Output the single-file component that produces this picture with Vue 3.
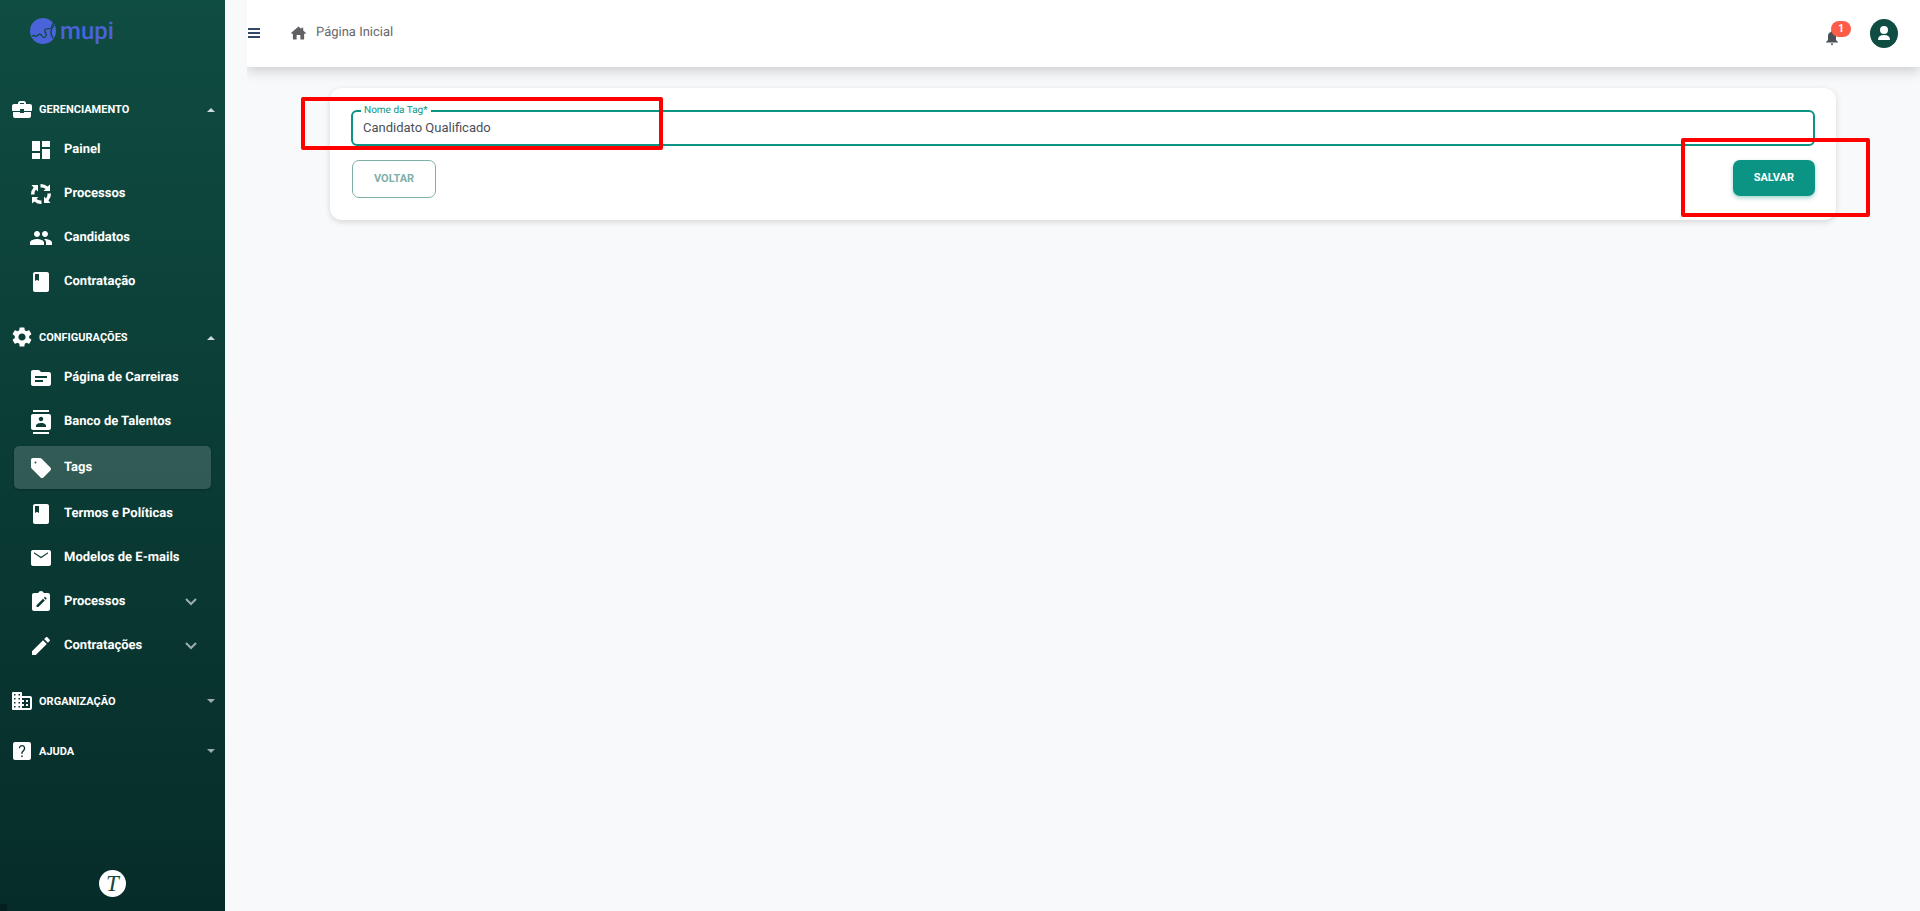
<template>
  <div class="layout">
    <aside class="sidebar">
      <a class="brand" href="#" aria-label="mupi">
        <svg class="brand__mark" viewBox="0 0 26 26">
          <circle cx="13" cy="13" r="13" fill="#4a63d9" />
          <path
            d="M2 18q2-1 3 0t3-1 4 1 4 0c2-2-4-5 0-7 3-1 6 1 6-3 0-2 2-3 2-4"
            fill="none"
            stroke="#0e4a40"
            stroke-width="1.3"
          />
          <path d="M24 7c-4 5-4 9-1 13" fill="none" stroke="#0e4a40" stroke-width="1.4" />
        </svg>
        <span class="brand__name">mupi</span>
      </a>

      <nav class="menu">
        <section v-for="group in groups" :key="group.title" class="menu__group">
          <button type="button" class="menu__header" @click="group.open = !group.open">
            <svg class="icon" viewBox="0 0 24 24"><path :d="icons[group.icon]" fill-rule="evenodd" /></svg>
            <span class="menu__title">{{ group.title }}</span>
            <svg class="menu__caret" :class="{ 'menu__caret--up': group.open }" viewBox="0 0 8 5">
              <path d="M0 0h8L4 4z" />
            </svg>
          </button>

          <ul v-if="group.open && group.items.length" class="menu__list">
            <li v-for="item in group.items" :key="item.label">
              <a href="#" class="menu__item" :class="{ 'menu__item--active': item.active }">
                <svg class="icon" viewBox="0 0 24 24"><path :d="icons[item.icon]" fill-rule="evenodd" /></svg>
                <span class="menu__label">{{ item.label }}</span>
                <svg v-if="item.expandable" class="menu__chevron" viewBox="0 0 12 8">
                  <path d="M1 1l5 5 5-5" />
                </svg>
              </a>
            </li>
          </ul>
        </section>
      </nav>

      <div class="sidebar__footer">
        <span class="seal">T</span>
      </div>
      <span class="sidebar__corner"></span>
    </aside>

    <div class="page">
      <header class="topbar">
        <button type="button" class="topbar__toggle" aria-label="Menu">
          <svg viewBox="0 0 12 10"><path d="M0 1h12M0 5h12M0 9h12" /></svg>
        </button>
        <a href="#" class="breadcrumb">
          <svg class="breadcrumb__icon" viewBox="0 0 16 14">
            <path d="M8 0l3 2.600V1.500h2v2.900L16 7l-1 1-1-.4V13q0 1-1 1h-3V9H6v5H3q-1 0-1-1V7.600L1 8 0 7z" />
          </svg>
          <span>Página Inicial</span>
        </a>
        <div class="topbar__actions">
          <button type="button" class="bell" aria-label="Notificações">
            <svg viewBox="0 0 12 14">
              <path d="M6 0q1 0 1 1 3 .8 3 4v4l2 2v.500H0V11l2-2V5q0-3.200 3-4 0-1 1-1zM4.500 12.500h3Q7 14 6 14t-1.500-1.500z" />
            </svg>
            <span class="bell__badge">1</span>
          </button>
          <button type="button" class="avatar" aria-label="Perfil">
            <svg viewBox="0 0 14 15">
              <circle cx="7" cy="4" r="4" />
              <path d="M1 14q0-5 6-5t6 5z" />
            </svg>
          </button>
        </div>
      </header>

      <main class="content">
        <form class="card" @submit.prevent>
          <fieldset class="field">
            <legend><label for="tag-name">Nome da Tag*</label></legend>
            <input id="tag-name" v-model="tagName" type="text" />
          </fieldset>
          <div class="card__actions">
            <button type="button" class="btn btn--outline">VOLTAR</button>
            <button type="submit" class="btn btn--primary">SALVAR</button>
          </div>
        </form>
        <span class="marker marker--field"></span>
        <span class="marker marker--save"></span>
      </main>
    </div>
  </div>
</template>

<script setup>
import { ref } from "vue"

const tagName = ref("Candidato Qualificado")

const groups = ref([
  {
    title: "GERENCIAMENTO",
    icon: "briefcase",
    open: true,
    items: [
      { label: "Painel", icon: "dashboard" },
      { label: "Processos", icon: "cycle" },
      { label: "Candidatos", icon: "people" },
      { label: "Contratação", icon: "book" },
    ],
  },
  {
    title: "CONFIGURAÇÕES",
    icon: "gear",
    open: true,
    items: [
      { label: "Página de Carreiras", icon: "folder" },
      { label: "Banco de Talentos", icon: "contacts" },
      { label: "Tags", icon: "tag", active: true },
      { label: "Termos e Políticas", icon: "book" },
      { label: "Modelos de E-mails", icon: "mail" },
      { label: "Processos", icon: "clipboard", expandable: true },
      { label: "Contratações", icon: "pencil", expandable: true },
    ],
  },
  { title: "ORGANIZAÇÃO", icon: "building", open: false, items: [] },
  { title: "AJUDA", icon: "help", open: false, items: [] },
])

const icons = {
  briefcase:
    "M20 7h-4V5.500L14.500 4h-5L8 5.500V7H4c-1.100 0-2 .9-2 2v4c0 .6.4 1 1 1h7v-2h4v2h7c.6 0 1-.4 1-1V9c0-1.100-.9-2-2-2zM10 7V6h4v1zM10 16v-1H3v4c0 1.100.9 2 2 2h14c1.100 0 2-.9 2-2v-4h-7v1z",
  dashboard: "M3 13h8V3H3v10zm0 8h8v-6H3v6zm10 0h8V11h-8v10zm0-18v6h8V3h-8z",
  cycle:
    "M11.500 2A10 10 0 0 1 18.600 4.600L21 2.500V9h-6.500l2.100-2.100A7 7 0 0 0 11.500 5.500zM22 11.500A10 10 0 0 1 19.400 18.600L21.500 21H15v-6.500l2.100 2.100A7 7 0 0 0 18.500 11.500zM12.500 22A10 10 0 0 1 5.400 19.400L3 21.500V15h6.500l-2.100 2.100A7 7 0 0 0 12.500 18.500zM2 12.500A10 10 0 0 1 4.600 5.400L2.500 3H9v6.500L6.900 7.400A7 7 0 0 0 5.500 12.500z",
  people:
    "M16 11c1.660 0 2.990-1.340 2.990-3S17.660 5 16 5s-3 1.340-3 3 1.340 3 3 3zm-8 0c1.660 0 2.990-1.340 2.990-3S9.660 5 8 5 5 6.340 5 8s1.340 3 3 3zm0 2c-2.330 0-7 1.170-7 3.500V19h14v-2.500c0-2.330-4.670-3.500-7-3.500zm8 0c-.29 0-.62.02-.97.05 1.160.84 1.970 1.970 1.970 3.450V19h6v-2.500c0-2.330-4.670-3.500-7-3.500z",
  book: "M18 2H6c-1.100 0-2 .9-2 2v16c0 1.100.9 2 2 2h12c1.100 0 2-.9 2-2V4c0-1.100-.9-2-2-2zM6 4h4v7l-2-1.300L6 11V4z",
  gear: "M19.140 12.940c.04-.3.06-.61.06-.94 0-.32-.02-.64-.07-.94l2.030-1.580c.18-.14.23-.41.12-.61l-1.920-3.320c-.12-.22-.37-.29-.59-.22l-2.390.96c-.5-.38-1.030-.7-1.620-.94l-.36-2.540c-.04-.24-.24-.41-.48-.41h-3.840c-.24 0-.43.17-.47.41l-.36 2.540c-.59.24-1.130.57-1.620.94l-2.390-.96c-.22-.08-.47 0-.59.22L2.740 8.870c-.12.21-.08.47.12.61l2.030 1.580c-.05.3-.09.63-.09.94s.02.64.07.94l-2.030 1.580c-.18.14-.23.41-.12.61l1.920 3.320c.12.22.37.29.59.22l2.390-.96c.5.38 1.030.7 1.620.94l.36 2.540c.05.24.24.41.48.41h3.840c.24 0 .44-.17.47-.41l.36-2.540c.59-.24 1.130-.56 1.620-.94l2.390.96c.22.08.47 0 .59-.22l1.920-3.320c.12-.22.07-.47-.12-.61l-2.010-1.580zM12 15.600c-1.980 0-3.600-1.620-3.600-3.600s1.620-3.600 3.600-3.600 3.600 1.620 3.600 3.600-1.620 3.600-3.600 3.600z",
  folder:
    "M20 6h-8l-2-2H4c-1.100 0-1.990.9-1.990 2L2 18c0 1.100.9 2 2 2h16c1.100 0 2-.9 2-2V8c0-1.100-.9-2-2-2zm-6 10H6v-2h8v2zm4-4H6v-2h12v2z",
  contacts:
    "M20 0H4v2h16V0zM4 24h16v-2H4v2zM20 4H4c-1.100 0-2 .9-2 2v12c0 1.100.9 2 2 2h16c1.100 0 2-.9 2-2V6c0-1.100-.9-2-2-2zm-8 2.750c1.240 0 2.250 1.010 2.250 2.250s-1.010 2.250-2.250 2.250S9.750 10.240 9.750 9 10.760 6.750 12 6.750zM17 17H7v-1.500c0-1.670 3.330-2.500 5-2.500s5 .83 5 2.500V17z",
  tag: "M21.410 11.580l-9-9C12.050 2.220 11.550 2 11 2H4c-1.100 0-2 .9-2 2v7c0 .55.22 1.050.59 1.420l9 9c.36.36.86.58 1.410.58.55 0 1.050-.22 1.410-.59l7-7c.37-.36.59-.86.59-1.410 0-.55-.23-1.060-.59-1.420zM6.500 7.500C5.900 7.500 5.500 7 5.500 6.500S5.900 5.500 6.500 5.500 7.500 6 7.500 6.500 7 7.500 6.500 7.500z",
  mail: "M20 4H4c-1.100 0-1.990.9-1.990 2L2 18c0 1.100.9 2 2 2h16c1.100 0 2-.9 2-2V6c0-1.100-.9-2-2-2zm-1 3.500l-7 4.700-7-4.700V6.300l7 4.500 7-4.500z",
  clipboard:
    "M19 3h-4.180C14.400 1.840 13.300 1 12 1s-2.400.84-2.820 2H5c-1.100 0-2 .9-2 2v14c0 1.100.9 2 2 2h14c1.100 0 2-.9 2-2V5c0-1.100-.9-2-2-2zM7.500 17v-1.800l6.500-6.500 1.800 1.800L9.300 17zM14.800 7.900l1.200-1.200 1.800 1.800-1.200 1.200z",
  pencil:
    "M3 17.250V21h3.750L17.810 9.940l-3.750-3.750L3 17.250zM20.710 7.040c.39-.39.39-1.020 0-1.410l-2.340-2.340c-.39-.39-1.020-.39-1.410 0l-1.830 1.830 3.750 3.750 1.830-1.830z",
  building:
    "M12 7V4q0-1-1-1H3Q2 3 2 4v16q0 1 1 1h17q2 0 2-2V9q0-2-2-2H12zM5.500 18.500H4V17h1.500zM5.500 14.500H4V13h1.500zM5.500 10.500H4V9h1.500zM5.500 6.500H4V5h1.500zM10 18.500H8.500V17H10zM10 14.500H8.500V13H10zM10 10.500H8.500V9H10zM10 6.500H8.500V5H10zM20 19h-8v-2h2v-2h-2v-2h2v-2h-2V9h8v10zm-2-8h-2v2h2v-2zm0 4h-2v2h2v-2z",
  help: "M19 3H5c-1.100 0-2 .9-2 2v14c0 1.100.9 2 2 2h14c1.100 0 2-.9 2-2V5c0-1.100-.9-2-2-2zM11.200 18h1.500v-1.600h-1.500zM11.200 14.800h1.400c0-2.300 2.600-2.800 2.600-5.500C15.200 7.300 13.900 6 12 6S8.800 7.300 8.800 9.300h1.300c0-1.300.7-2.100 1.900-2.100s1.900.8 1.900 2.100c0 2.100-2.700 2.500-2.700 5.500z",
}
</script>

<style>
body {
  background: #f8f9fb;
}
</style>

<style scoped>
.layout {
  display: flex;
  min-height: 100vh;
  font-family: Roboto, "Liberation Sans", sans-serif;
  font-size: 13px;
  text-rendering: geometricPrecision;
}

button {
  font-family: inherit;
  border: 0;
  padding: 0;
  background: none;
  cursor: pointer;
}

a {
  color: inherit;
  text-decoration: none;
}

/* Sidebar */
.sidebar {
  position: relative;
  display: flex;
  flex-direction: column;
  flex: none;
  width: 225px;
  color: #fff;
  background: linear-gradient(180deg, #0f4c41 0%, #062c29 100%);
}

.brand {
  display: flex;
  align-items: center;
  height: 62px;
  padding-left: 30px;
  gap: 4px;
  color: #4a63d9;
}

.brand__mark {
  width: 26px;
  height: 26px;
}

.brand__name {
  font-size: 24px;
  font-weight: 500;
  line-height: 26px;
}

.menu {
  display: flex;
  flex-direction: column;
  padding-top: 22px;
}

.menu__header {
  display: flex;
  align-items: center;
  width: 100%;
  height: 50px;
  padding: 0 10px;
  gap: 5px;
  color: #fff;
  text-align: left;
}

.icon {
  flex: none;
  width: 24px;
  height: 24px;
  fill: #fff;
}

.menu__title {
  flex: 1;
  font-size: 11px;
  font-weight: 700;
}

.menu__caret {
  width: 8px;
  height: 5px;
  fill: rgba(255, 255, 255, 0.6);
}

.menu__caret--up {
  transform: rotate(180deg);
  fill: rgba(255, 255, 255, 0.8);
}

.menu__list {
  display: flex;
  flex-direction: column;
  gap: 1px;
  margin: -6px 0 0;
  padding: 0 14px 9px;
  list-style: none;
}

.menu__item {
  display: flex;
  align-items: center;
  height: 43px;
  padding: 0 14px 0 15px;
  gap: 11px;
  border-radius: 5px;
}

.menu__item--active {
  margin: 2px 0;
  background: rgba(255, 255, 255, 0.16);
  box-shadow: 0 1px 3px rgba(0, 0, 0, 0.2);
}

.menu__label {
  flex: 1;
  font-weight: 700;
}

.menu__chevron {
  width: 12px;
  height: 8px;
  fill: none;
  stroke: rgba(255, 255, 255, 0.6);
  stroke-width: 2;
}

.sidebar__footer {
  display: flex;
  justify-content: center;
  margin-top: auto;
  padding-bottom: 14px;
}

.seal {
  width: 27px;
  height: 27px;
  border-radius: 50%;
  background: #fff;
  color: #14453d;
  font-family: "Liberation Serif", serif;
  font-size: 23px;
  font-style: italic;
  line-height: 27px;
  text-align: center;
}

.sidebar__corner {
  position: absolute;
  left: 0;
  bottom: 0;
  width: 7px;
  height: 7px;
  background: #041f1d;
}

/* Page */
.page {
  flex: 1;
  min-width: 0;
  padding-left: 22px;
}

/* the shadow falls only below the bar */
.topbar {
  display: flex;
  align-items: center;
  height: 67px;
  padding: 0 22px 0 1px;
  box-sizing: border-box;
  background: #fff;
  box-shadow: 0 4px 12px rgba(0, 0, 0, 0.18);
  clip-path: inset(0 0 -20px 0);
}

.topbar__toggle {
  display: flex;
  padding-bottom: 2px;
}

.topbar__toggle svg {
  width: 12px;
  height: 10px;
  stroke: #344767;
  stroke-width: 2;
}

.breadcrumb {
  display: flex;
  align-items: center;
  gap: 10px;
  margin-left: 31px;
  padding-bottom: 2px;
  color: #67686b;
}

.breadcrumb__icon {
  width: 15px;
  height: 14px;
  fill: #5f6063;
}

.topbar__actions {
  display: flex;
  align-items: center;
  gap: 32px;
  margin-left: auto;
}

.bell {
  position: relative;
  display: flex;
  padding-top: 8px;
}

.bell svg {
  width: 12px;
  height: 14px;
  fill: #495057;
}

.bell__badge {
  position: absolute;
  left: 5px;
  top: -2px;
  width: 20px;
  height: 16px;
  border-radius: 8px;
  background: #fd5c48;
  color: #fff;
  font-size: 10px;
  font-weight: 700;
  line-height: 16px;
}

.avatar {
  display: flex;
  align-items: center;
  justify-content: center;
  width: 28px;
  height: 29px;
  border-radius: 50%;
  background: #0f4c41;
}

.avatar svg {
  width: 14px;
  height: 15px;
  fill: #fff;
}

.content {
  position: relative;
  padding: 21px 84px 0 83px;
}

.card {
  padding: 17px 21px 22px;
  border-radius: 12px;
  background: #fff;
  box-shadow: 0 2px 6px rgba(0, 0, 0, 0.14);
}

.field {
  min-width: 0;
  margin: 0;
  padding: 0 10px 0 8px;
  border: 2px solid #0b9484;
  border-radius: 6px;
}

.field legend {
  padding: 0 3px;
  color: #0b9484;
  font-size: 10px;
  line-height: 12px;
}

.field input {
  display: block;
  width: 100%;
  height: 27px;
  padding: 0 2px 6px;
  border: 0;
  outline: none;
  box-sizing: border-box;
  background: none;
  color: #495057;
  font-family: inherit;
  font-size: 13px;
}

.card__actions {
  display: flex;
  align-items: flex-start;
  justify-content: space-between;
  padding-top: 14px;
}

.btn {
  height: 36px;
  padding: 0 21px 2px;
  border-radius: 7px;
  font-size: 11px;
  font-weight: 700;
}

.btn--outline {
  height: 38px;
  border: 1px solid #7fb0a8;
  margin-left: 1px;
  color: #7fb0a8;
}

.btn--primary {
  background: #0b9484;
  color: #fff;
  box-shadow: 0 2px 4px rgba(11, 148, 132, 0.4);
}

/* Highlight frames drawn over the form */
.marker {
  position: absolute;
  border: 4px solid #f00;
  border-radius: 2px;
  box-sizing: border-box;
  pointer-events: none;
}

.marker--field {
  left: 54px;
  top: 30px;
  width: 362px;
  height: 53px;
}

.marker--save {
  right: 50px;
  top: 71px;
  width: 189px;
  height: 79px;
}
</style>
